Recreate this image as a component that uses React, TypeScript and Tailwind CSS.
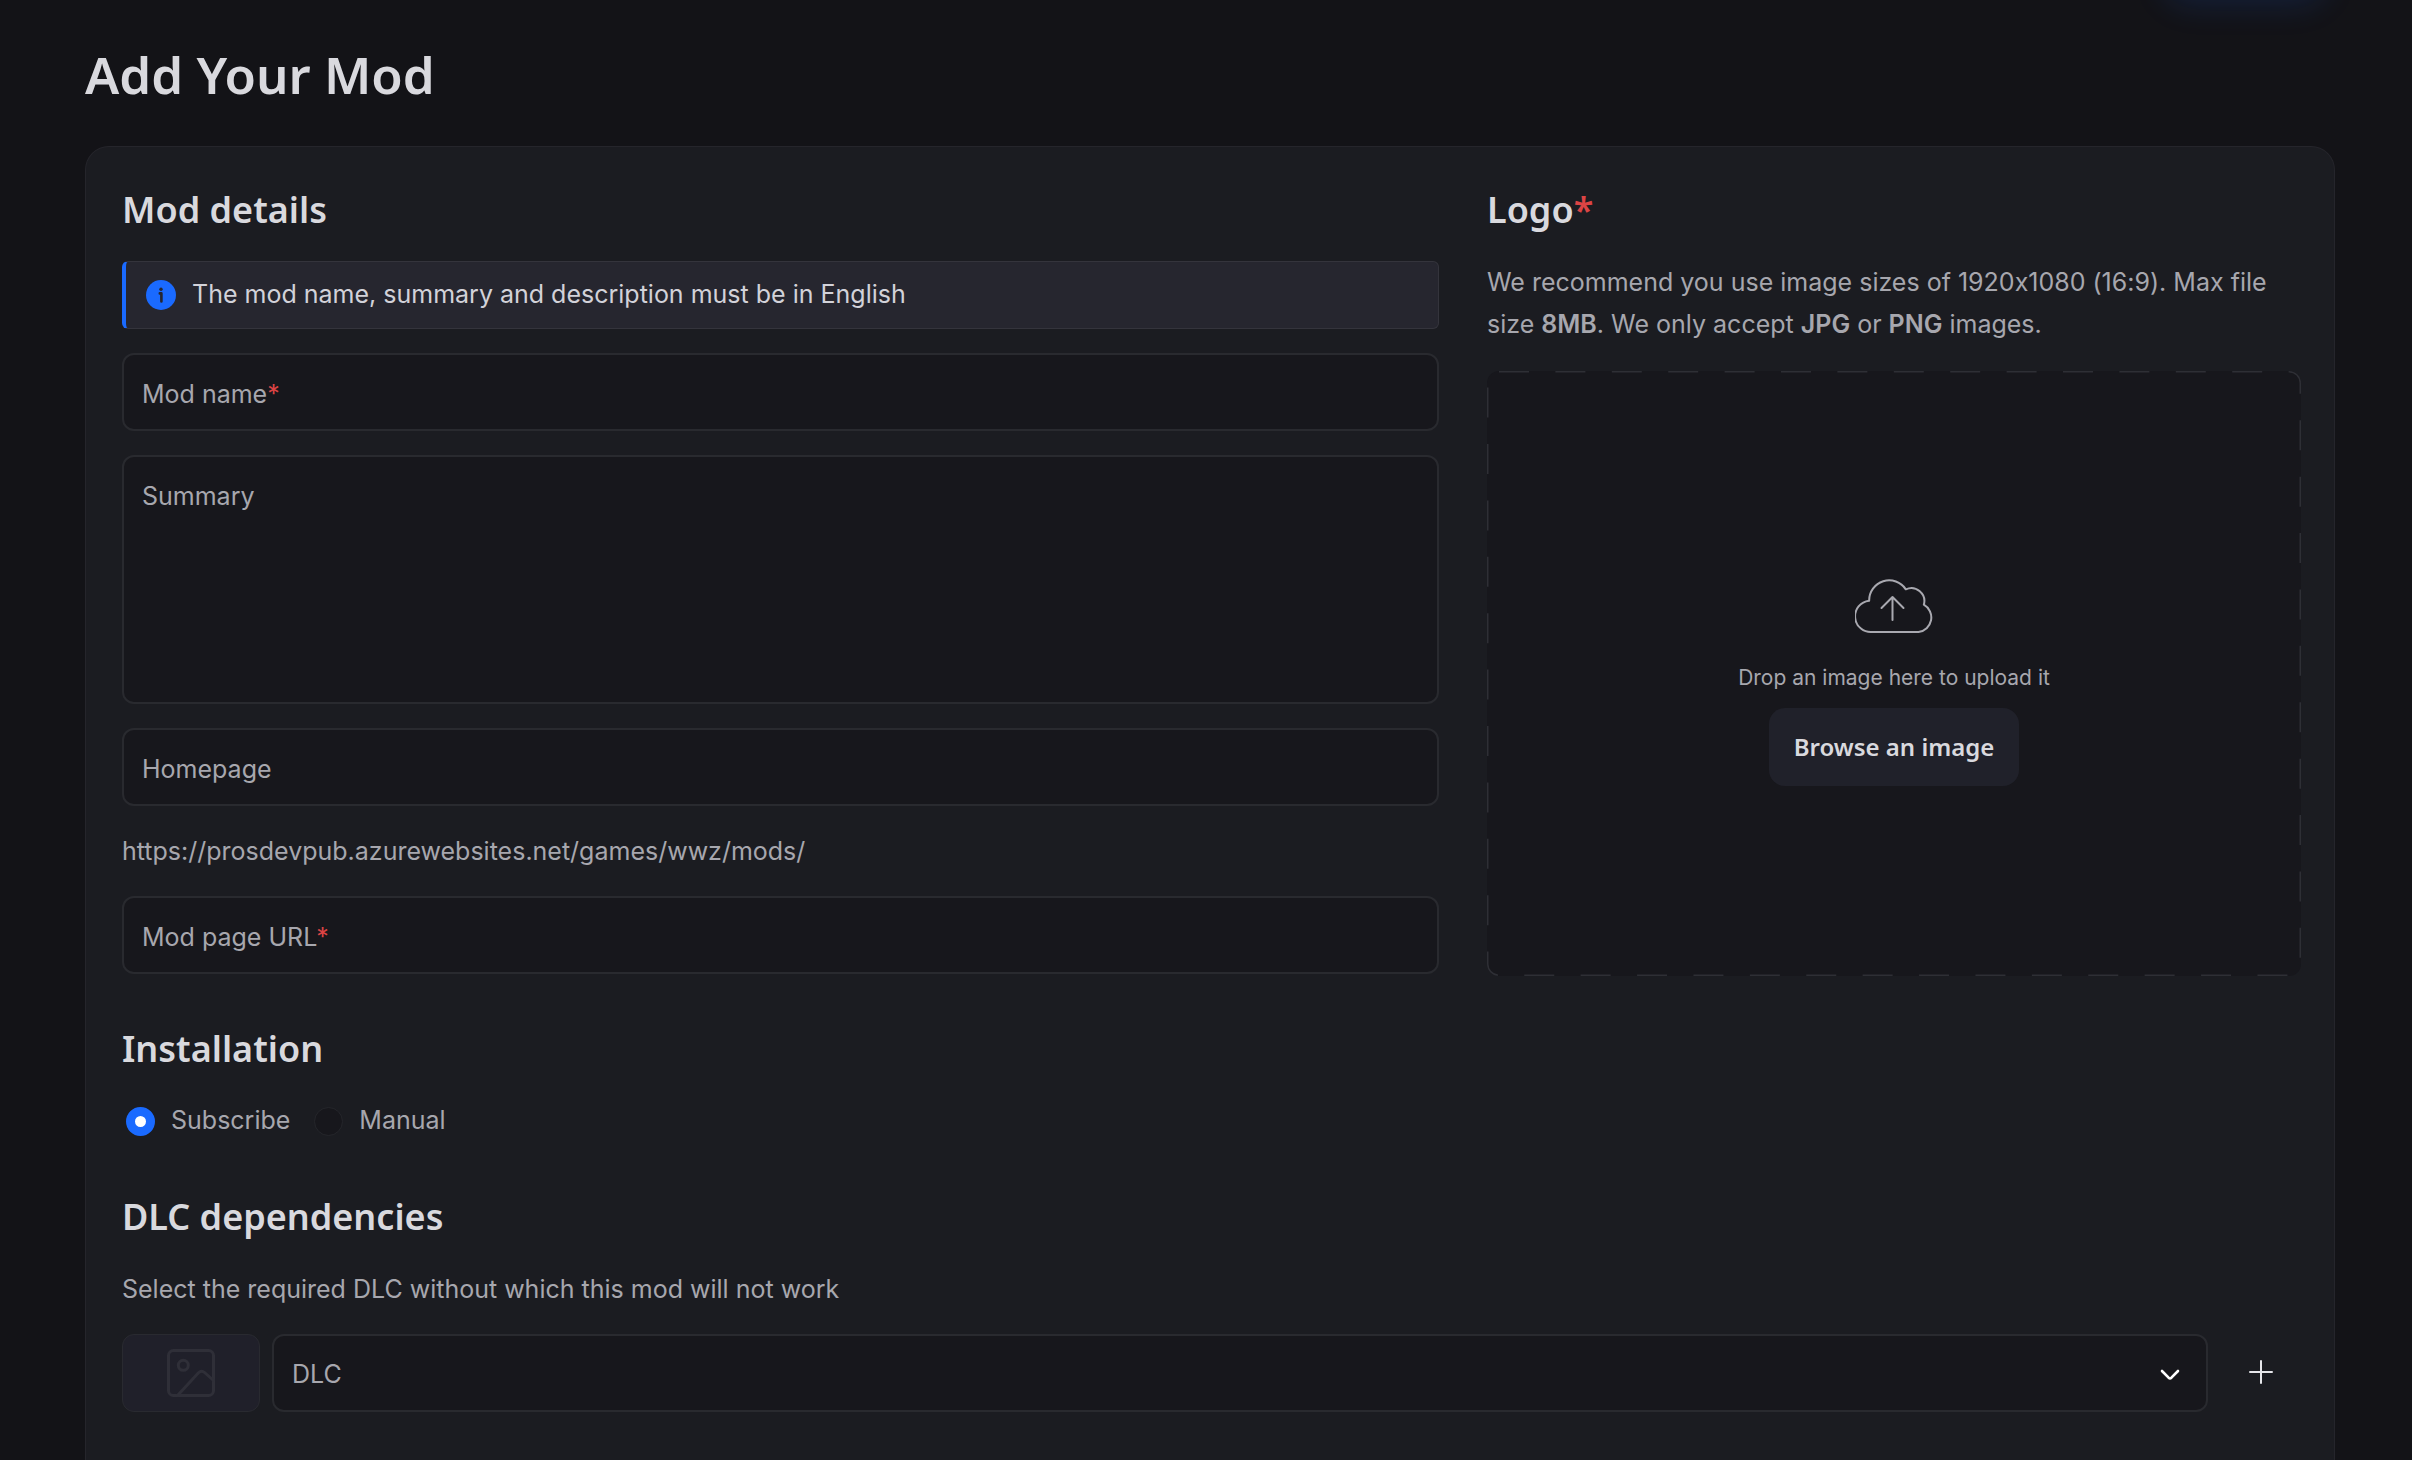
import { useId, useState } from "react";
import type { ReactNode } from "react";

const headingFont = "font-['Noto_Sans','Open_Sans',sans-serif] font-semibold text-[#d9d9de]";

function SectionTitle({ children }: { children: ReactNode }) {
  return <h2 className={`${headingFont} text-[36px] leading-[50px]`}>{children}</h2>;
}

function Required() {
  return <span className="text-[#dc4444]">*</span>;
}

function Field({ label, required = false, multiline = false }: { label: string; required?: boolean; multiline?: boolean }) {
  const id = useId();
  const [value, setValue] = useState("");
  const box =
    "col-start-1 row-start-1 block w-full resize-none rounded-xl border-2 border-[#292a2f] bg-[#17171c] px-[18px] outline-none focus:border-[#1a6aff]";
  return (
    <div className="grid">
      {multiline ? (
        <textarea id={id} value={value} onChange={(e) => setValue(e.target.value)} className={`${box} h-[249px] py-[18px]`} />
      ) : (
        <input id={id} type="text" required={required} value={value} onChange={(e) => setValue(e.target.value)} className={`${box} h-[78px]`} />
      )}
      {value === "" && (
        <label htmlFor={id} className="pointer-events-none col-start-1 row-start-1 self-start px-5 pt-5 leading-[42px]">
          {label}
          {required && <Required />}
        </label>
      )}
    </div>
  );
}

function RadioOption({ label, value, defaultChecked = false }: { label: string; value: string; defaultChecked?: boolean }) {
  return (
    <label className="flex h-[42px] items-center gap-4">
      <input
        type="radio"
        name="installation"
        value={value}
        defaultChecked={defaultChecked}
        className="size-[29px] appearance-none rounded-full border border-[#25262b] bg-[#17171c] checked:border-[9px] checked:border-[#1a6aff] checked:bg-white"
      />
      {label}
    </label>
  );
}

function InfoIcon() {
  return (
    <svg viewBox="0 0 30 30" className="size-[30px] shrink-0" aria-hidden="true">
      <circle cx="15" cy="15" r="15" fill="#1a6aff" />
      <circle cx="15" cy="9.2" r="1.7" fill="#26262f" />
      <path d="M13.8 13.4h1.6v8" fill="none" stroke="#26262f" strokeWidth="2.6" strokeLinecap="round" strokeLinejoin="round" />
    </svg>
  );
}

function CloudUploadIcon() {
  return (
    <svg viewBox="0 0 236 168" className="h-14 w-[79px]" fill="none" stroke="#a9a9b0" strokeWidth="6" strokeLinecap="round" strokeLinejoin="round" aria-hidden="true">
      <path d="M52 162A47 47 0 0 1 42 68A60 60 0 0 1 152 34A39 39 0 0 1 206 80A44 44 0 0 1 190 162Z" />
      <path d="M112 126V58M79 90L112 57L145 90" />
    </svg>
  );
}

function ImageIcon() {
  return (
    <svg viewBox="0 0 48 48" className="size-12" fill="none" stroke="#2f2f38" strokeWidth="3" strokeLinecap="round" strokeLinejoin="round" aria-hidden="true">
      <rect x="1.5" y="1.5" width="45" height="45" rx="5" />
      <circle cx="16.3" cy="16.3" r="5" />
      <path d="M11 46L31.5 23.8Q34.5 20.8 37.5 23.5L46 31" />
    </svg>
  );
}

export default function App() {
  return (
    <div className="relative flex h-screen flex-col overflow-hidden bg-[#131317] pt-[42px] pr-[77px] pl-[85px] font-['Inter',sans-serif] text-[25px] text-[#a7a7ae] [font-feature-settings:'calt'_0]">
      <div className="pointer-events-none absolute -top-12 right-[92px] h-10 w-[150px] rounded-full shadow-[0_6px_32px_8px_rgba(26,106,255,0.14)]" />

      <h1 className={`${headingFont} text-[51px] leading-[64px]`}>Add Your Mod</h1>

      <form
        onSubmit={(e) => e.preventDefault()}
        className="mt-10 flex-1 rounded-t-3xl border border-b-0 border-[#25252b] bg-[#1b1c21] pt-[38px] pr-[33px] pl-9"
      >
        <div className="grid grid-cols-[1317fr_814fr] gap-12">
          <section>
            <SectionTitle>Mod details</SectionTitle>
            <div className="mt-[26px] flex flex-col gap-6">
              <div className="flex h-[68px] items-center gap-4 rounded-md border border-l-4 border-[#34343c] border-l-[#1a6aff] bg-[#26262f] px-5 text-[#d2d2d9]">
                <InfoIcon />
                <p>The mod name, summary and description must be in English</p>
              </div>
              <Field label="Mod name" required />
              <Field label="Summary" multiline />
              <Field label="Homepage" />
              <p className="leading-[42px]">https://prosdevpub.azurewebsites.net/games/wwz/mods/</p>
              <Field label="Mod page URL" required />
            </div>
          </section>

          <section>
            <SectionTitle>
              Logo
              <Required />
            </SectionTitle>
            <p className="mt-[26px] leading-[42px]">
              We recommend you use image sizes of 1920x1080 (16:9). Max file size <b className="font-semibold">8MB</b>. We only accept{" "}
              <b className="font-semibold">JPG</b> or <b className="font-semibold">PNG</b> images.
            </p>
            <div className="relative mt-[26px] flex h-[605px] flex-col items-center justify-center overflow-hidden rounded-xl bg-[#17171c] pt-4">
              <svg className="pointer-events-none absolute inset-0 size-full" aria-hidden="true">
                <rect width="100%" height="100%" rx="12" fill="none" stroke="#2e2f35" strokeWidth="3" strokeDasharray="30 26.4" />
              </svg>
              <CloudUploadIcon />
              <p className="mt-7 text-[21px] leading-8">Drop an image here to upload it</p>
              <button type="button" className={`${headingFont} mt-[14px] h-[78px] rounded-2xl bg-[#20212a] px-[25px] text-[24px]`}>
                Browse an image
              </button>
            </div>
          </section>
        </div>

        <section className="mt-12">
          <SectionTitle>Installation</SectionTitle>
          <div role="radiogroup" aria-label="Installation" className="mt-[26px] ml-1 flex gap-6">
            <RadioOption label="Subscribe" value="subscribe" defaultChecked />
            <RadioOption label="Manual" value="manual" />
          </div>
        </section>

        <section className="mt-[50px]">
          <SectionTitle>DLC dependencies</SectionTitle>
          <p className="mt-[26px] leading-[42px]">Select the required DLC without which this mod will not work</p>
          <div className="mt-6 flex gap-3">
            <div className="flex h-[78px] w-[138px] items-center justify-center rounded-xl border border-[#292a30] bg-[#20202a]">
              <ImageIcon />
            </div>
            <div className="relative flex-1">
              <select
                aria-label="DLC"
                className="h-[78px] w-full appearance-none rounded-xl border-2 border-[#292a2f] bg-[#17171c] px-[18px] pt-1 outline-none focus:border-[#1a6aff]"
              >
                <option>DLC</option>
              </select>
              <svg
                viewBox="0 0 20 12"
                className="pointer-events-none absolute top-[35px] right-7 h-3 w-5"
                fill="none"
                stroke="#ffffff"
                strokeWidth="2.6"
                strokeLinecap="round"
                strokeLinejoin="round"
                aria-hidden="true"
              >
                <path d="M2 2L8.6 8.7Q10 10 11.4 8.7L18 2" />
              </svg>
            </div>
            <button type="button" aria-label="Add DLC" className="flex h-[76px] w-[81px] items-center justify-center">
              <svg viewBox="0 0 24 24" className="size-6" fill="none" stroke="#e6e6ea" strokeWidth="2" strokeLinecap="round" aria-hidden="true">
                <path d="M12 1V23M1 12H23" />
              </svg>
            </button>
          </div>
        </section>
      </form>
    </div>
  );
}
